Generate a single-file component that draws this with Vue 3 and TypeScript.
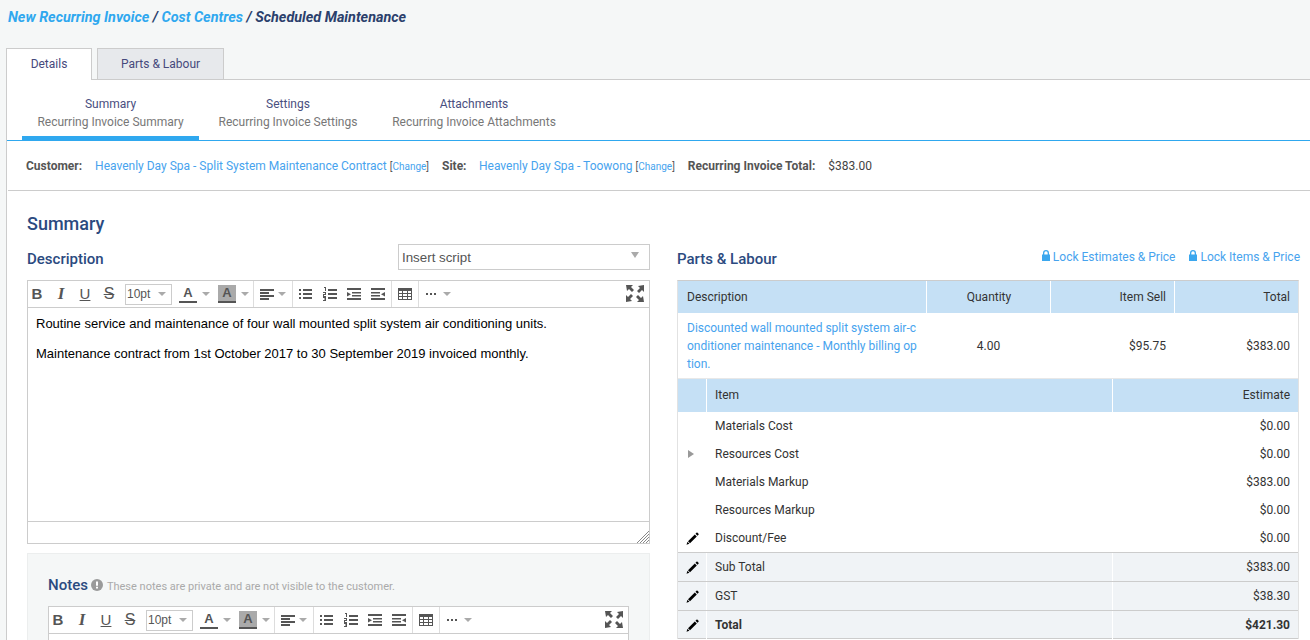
<template>
  <div class="page">
    <div class="crumbs">
      <a>New Recurring Invoice</a> / <a>Cost Centres</a> / <span class="crumb-current">Scheduled Maintenance</span>
    </div>

    <div class="tabs">
      <div class="tab active">Details</div>
      <div class="tab">Parts &amp; Labour</div>
    </div>

    <div class="panel">
      <div class="subtabs">
        <div
          v-for="(tab, i) in subTabs"
          :key="tab.title"
          class="subtab"
          :class="{ current: i === 0 }"
        >
          <div class="subtab-title">{{ tab.title }}</div>
          <div class="subtab-sub">{{ tab.sub }}</div>
        </div>
      </div>

      <div class="info-row">
        <b>Customer:</b>
        <a class="info-link">Heavenly Day Spa - Split System Maintenance Contract</a>
        <span class="change">[<a>Change</a>]</span>
        <b class="info-site">Site:</b>
        <a class="info-link site-link">Heavenly Day Spa - Toowong</a>
        <span class="change">[<a>Change</a>]</span>
        <b class="info-total">Recurring Invoice Total:</b>
        <span class="info-amount">$383.00</span>
      </div>

      <div class="content">
        <h2 class="section-title">Summary</h2>
        <div class="columns">
          <div class="col">
            <div class="col-head">
              <h3>Description</h3>
              <div class="script-select">
                <span>Insert script</span>
                <i class="caret select-caret" />
              </div>
            </div>

            <div class="editor">
              <div class="toolbar">
                <div class="tool-group g-format">
                  <span class="fmt bold">B</span>
                  <span class="fmt ital">I</span>
                  <span class="fmt under">U</span>
                  <span class="fmt strike">S</span>
                  <span class="size-box">10pt<i class="caret" /></span>
                  <span class="color-btn"><span class="color-a">A</span></span><i class="caret c-gap" />
                  <span class="color-btn"><span class="color-a shaded">A</span></span><i class="caret c-gap" />
                </div>
                <div class="tool-group g-align">
                  <svg class="ico" width="16" height="14" viewBox="0 0 16 14"><path v-for="d in icons.align" :key="d" :d="d" /></svg>
                  <i class="caret c-tight" />
                </div>
                <div class="tool-group g-lists">
                  <svg v-for="name in listIcons" :key="name" class="ico" width="16" height="14" viewBox="0 0 16 14"><path v-for="d in icons[name]" :key="d" :d="d" /></svg>
                </div>
                <div class="tool-group g-table">
                  <svg class="ico" width="16" height="14" viewBox="0 0 16 14"><path :d="icons.table" fill-rule="evenodd" /></svg>
                </div>
                <div class="tool-group g-more">
                  <svg class="ico" width="12" height="14" viewBox="0 0 12 14"><path d="M1 6h2v2H1zM5 6h2v2H5zM9 6h2v2H9z" /></svg>
                  <i class="caret c-more" />
                </div>
                <svg class="ico fullscreen" width="18" height="17" viewBox="0 0 18 17"><path :d="icons.full" /></svg>
              </div>
              <div class="editor-body">
                <p>Routine service and maintenance of four wall mounted split system air conditioning units.</p>
                <p>Maintenance contract from 1st October 2017 to 30 September 2019 invoiced monthly.</p>
              </div>
              <div class="editor-status">
                <svg class="grip" width="12" height="12" viewBox="0 0 12 12"><path d="M0 12 12 0M3 12l9-9M6 12l6-6M9 12l3-3" stroke="#888" fill="none" /></svg>
              </div>
            </div>

            <div class="notes">
              <div class="notes-head">
                <h3>Notes</h3>
                <svg class="info-ico" width="12" height="12" viewBox="0 0 12 12"><circle cx="6" cy="6" r="6" fill="#9a9a9a" /><path d="M5 2.500h2v4.200H5zM5 7.800h2v1.800H5z" fill="#fff" /></svg>
                <span class="notes-hint">These notes are private and are not visible to the customer.</span>
              </div>
              <div class="editor notes-editor">
                <div class="toolbar">
                  <div class="tool-group g-format">
                    <span class="fmt bold">B</span>
                    <span class="fmt ital">I</span>
                    <span class="fmt under">U</span>
                    <span class="fmt strike">S</span>
                    <span class="size-box">10pt<i class="caret" /></span>
                    <span class="color-btn"><span class="color-a">A</span></span><i class="caret c-gap" />
                    <span class="color-btn"><span class="color-a shaded">A</span></span><i class="caret c-gap" />
                  </div>
                  <div class="tool-group g-align">
                    <svg class="ico" width="16" height="14" viewBox="0 0 16 14"><path v-for="d in icons.align" :key="d" :d="d" /></svg>
                    <i class="caret c-tight" />
                  </div>
                  <div class="tool-group g-lists">
                    <svg v-for="name in listIcons" :key="name" class="ico" width="16" height="14" viewBox="0 0 16 14"><path v-for="d in icons[name]" :key="d" :d="d" /></svg>
                  </div>
                  <div class="tool-group g-table">
                    <svg class="ico" width="16" height="14" viewBox="0 0 16 14"><path :d="icons.table" fill-rule="evenodd" /></svg>
                  </div>
                  <div class="tool-group g-more">
                    <svg class="ico" width="12" height="14" viewBox="0 0 12 14"><path d="M1 6h2v2H1zM5 6h2v2H5zM9 6h2v2H9z" /></svg>
                    <i class="caret c-more" />
                  </div>
                  <svg class="ico fullscreen" width="18" height="17" viewBox="0 0 18 17"><path :d="icons.full" /></svg>
                </div>
                <div class="editor-body notes-body" />
              </div>
            </div>
          </div>

          <div class="col">
            <div class="col-head">
              <h3>Parts &amp; Labour</h3>
              <div class="locks">
                <a v-for="label in lockLinks" :key="label">
                  <svg width="8" height="11" viewBox="0 0 8 11"><path d="M1 4.500V3a3 3 0 0 1 6 0v1.500h1V11H0V4.500zm1.300 0h3.400V3a1.700 1.700 0 0 0-3.400 0z" fill="#3ba7ee" fill-rule="evenodd" /></svg>
                  {{ label }}
                </a>
              </div>
            </div>

            <div class="grid-table">
              <div class="row cols-main head first-head">
                <div>Description</div>
                <div class="center">Quantity</div>
                <div class="right">Item Sell</div>
                <div class="right">Total</div>
              </div>
              <div class="row cols-main line-row">
                <div class="line-desc">Discounted wall mounted split system air-conditioner maintenance - Monthly billing option.</div>
                <div class="center">4.00</div>
                <div class="right">$95.75</div>
                <div class="right">$383.00</div>
              </div>
              <div class="row cols-sub head">
                <div />
                <div class="item-cell">Item</div>
                <div class="right">Estimate</div>
              </div>
              <div v-for="item in costRows" :key="item.label" class="row cols-sub cost">
                <div class="marker">
                  <i v-if="item.expand" class="expand" />
                  <svg v-if="item.edit" width="13" height="13" viewBox="0 0 13 13"><path :d="icons.pencil" /></svg>
                </div>
                <div>{{ item.label }}</div>
                <div class="right">{{ item.value }}</div>
              </div>
              <div
                v-for="item in totalRows"
                :key="item.label"
                class="row cols-sub total"
                :class="{ grand: item.grand }"
              >
                <div class="marker">
                  <svg width="13" height="13" viewBox="0 0 13 13"><path :d="icons.pencil" /></svg>
                </div>
                <div class="item-cell">{{ item.label }}</div>
                <div class="right">{{ item.value }}</div>
              </div>
            </div>
          </div>
        </div>
      </div>
    </div>
  </div>
</template>

<script setup lang="ts">
const subTabs = [
  { title: 'Summary', sub: 'Recurring Invoice Summary' },
  { title: 'Settings', sub: 'Recurring Invoice Settings' },
  { title: 'Attachments', sub: 'Recurring Invoice Attachments' }
]

const lockLinks = ['Lock Estimates & Price', 'Lock Items & Price']

const costRows = [
  { label: 'Materials Cost', value: '$0.00' },
  { label: 'Resources Cost', value: '$0.00', expand: true },
  { label: 'Materials Markup', value: '$383.00' },
  { label: 'Resources Markup', value: '$0.00' },
  { label: 'Discount/Fee', value: '$0.00', edit: true }
]

const totalRows = [
  { label: 'Sub Total', value: '$383.00' },
  { label: 'GST', value: '$38.30' },
  { label: 'Total', value: '$421.30', grand: true }
]

const listIcons = ['bullets', 'numbers', 'indent', 'outdent'] as const

// toolbar glyphs, all on small pixel grids
const icons = {
  align: ['M1 2h14v2H1z', 'M1 5h9v2H1z', 'M1 8h14v2H1z', 'M1 11h9v2H1z'],
  bullets: ['M1 2h2v2H1zM5 2h9v2H5z', 'M1 6h2v2H1zM5 6h9v2H5z', 'M1 10h2v2H1zM5 10h9v2H5z'],
  numbers: ['M2 0h2v4H3V1H2z', 'M1 5h3v3H2v1h2v1H1V7h2V6H1z', 'M1 10h3v4H1v-1h2v-.5H2v-1h1V11H1z', 'M6 2h9v2H6zM6 6h9v2H6zM6 10h9v2H6z'],
  indent: ['M1 1h14v2H1z', 'M6 5h9v1.500H6zM6 8h9v1.500H6z', 'M1 5l4 2.200L1 9.500z', 'M1 11h14v2H1z'],
  outdent: ['M1 1h14v2H1z', 'M1 5h9v1.500H1zM1 8h9v1.500H1z', 'M15 5l-4 2.200 4 2.300z', 'M1 11h14v2H1z'],
  table: 'M1 1h14v12H1zM2 4v2h3V4zm4 0v2h4V4zm5 0v2h3V4zM2 7v2h3V7zm4 0v2h4V7zm5 0v2h3V7zM2 10v2h3v-2zm4 0v2h4v-2zm5 0v2h3v-2z',
  full: 'M0 0h7L5 2l3 3-2 2-3-3-2 2zM18 0v7l-2-2-3 3-2-2 3-3-2-2zM0 17v-7l2 2 3-3 2 2-3 3 2 2zM18 17h-7l2-2-3-3 2-2 3 3 2-2z',
  pencil: 'M10.500.8c.3-.3.7-.3 1 0l1 1c.3.3.3.7 0 1l-1 1-2-2zM8.800 2.500l2 2-6.800 6.800-2-2zM1.500 9.800l1.900 1.900-2.900 1z'
}
</script>

<style>
html,
body {
  margin: 0;
  height: 640px;
  overflow: hidden;
  background: #f5f7f7;
}
</style>

<style scoped>
.page {
  font-family: Roboto, "Liberation Sans", sans-serif;
  font-size: 12px;
  color: #333;
  height: 640px;
  overflow: hidden;
  background: #f5f7f7;
}

.crumbs {
  height: 48px;
  box-sizing: border-box;
  padding: 10px 8px 0;
  font-size: 14.4px;
  line-height: 16px;
  font-weight: 700;
  font-style: italic;
  color: #2b3f6c;
}

.crumbs a {
  color: #2fa8ef;
}

.crumb-current {
  color: #2b3f6c;
}

.tabs {
  display: flex;
  gap: 5px;
  padding-left: 6px;
  height: 31px;
}

.tab {
  box-sizing: border-box;
  width: 127px;
  height: 31px;
  line-height: 31px;
  text-align: center;
  color: #46497c;
  background: #e7e9ec;
  border: 1px solid #ccc;
  border-bottom: 0;
}

.tab.active {
  width: 86px;
  height: 32px;
  background: #fff;
  position: relative;
  z-index: 1;
}

.panel {
  margin-left: 6px;
  background: #fff;
  border-left: 1px solid #ccc;
  border-top: 1px solid #ccc;
  height: 560px;
}

.subtabs {
  display: flex;
  height: 60px;
  padding-left: 15px;
  border-bottom: 1px solid #2fa8ef;
}

.subtab {
  box-sizing: border-box;
  height: 60px;
  padding: 15px 0 0;
  width: 177px;
  text-align: center;
  line-height: 18px;
}

.subtab:nth-child(2) {
  width: 178px;
}

.subtab:last-child {
  width: 194px;
}

.subtab.current {
  border-bottom: 4px solid #2fa8ef;
}

.subtab-title {
  color: #4a4f80;
}

.subtab-sub {
  color: #777;
}

.info-row {
  display: flex;
  align-items: center;
  height: 49px;
  margin-left: 1px;
  padding-left: 18px;
  border-bottom: 1px solid #ccc;
}

.info-row b {
  font-weight: 700;
  color: #555;
}

.info-link {
  margin-left: 13px;
  color: #47a3ee;
}

.site-link {
  margin-left: 12.500px;
}

.change {
  margin-left: 3px;
  padding-top: 1px;
  font-size: 10px;
  color: #555;
}

.change a {
  color: #47a3ee;
}

.info-site,
.info-total {
  margin-left: 13px;
}

.info-amount {
  margin-left: 13px;
  color: #444;
}

.content {
  padding: 0 10px 0 20px;
}

.section-title {
  margin: 0;
  padding-top: 22px;
  height: 53px;
  box-sizing: border-box;
  font-size: 18px;
  line-height: 21px;
  font-weight: 500;
  color: #2b4a80;
}

.columns {
  display: flex;
  gap: 27px;
}

.col {
  width: 623px;
  flex: none;
}

.col-head {
  display: flex;
  justify-content: space-between;
  align-items: center;
  height: 26px;
  margin-bottom: 10px;
}

h3 {
  margin: 0;
  font-size: 15px;
  line-height: 16px;
  font-weight: 500;
  color: #2b4a80;
  padding-top: 4px;
}

.script-select {
  box-sizing: border-box;
  width: 252px;
  height: 26px;
  padding: 0 10px 0 3px;
  display: flex;
  justify-content: space-between;
  align-items: center;
  border: 1px solid #ccc;
  font-family: "Liberation Sans", Arial, sans-serif;
  font-size: 13.33px;
  color: #555;
}

.caret {
  display: inline-block;
  width: 0;
  height: 0;
  border-left: 4px solid transparent;
  border-right: 4px solid transparent;
  border-top: 4px solid #aaa;
}

.select-caret {
  border-left-width: 4.500px;
  border-right-width: 4.500px;
  border-top-width: 6px;
  margin-top: -4px;
}

.editor {
  box-sizing: border-box;
  border: 1px solid #ccc;
  background: #fff;
}

.toolbar {
  display: flex;
  align-items: center;
  height: 26px;
  border-bottom: 1px solid #ccc;
  position: relative;
  color: #555;
}

.tool-group {
  display: flex;
  align-items: center;
  height: 26px;
  border-right: 1px solid #ddd;
}

.g-format {
  padding-right: 3px;
}

.g-align {
  padding: 0 6px 0 5px;
}

.g-lists {
  gap: 8px;
  padding: 0 5px;
}

.g-table {
  padding: 0 5px;
}

.g-more {
  padding-left: 6px;
  border-right: 0;
}

.fmt {
  width: 24px;
  text-align: center;
  font-family: "Liberation Sans", Arial, sans-serif;
  font-size: 15px;
  line-height: 26px;
  color: #555;
}

.fmt.bold {
  font-weight: 700;
  margin-left: -3px;
}

.fmt.ital {
  font-style: italic;
  font-weight: 700;
  font-family: "Liberation Serif", serif;
  font-size: 17px;
}

.fmt.under {
  text-decoration: underline;
}

.fmt.strike {
  text-decoration: line-through;
  font-size: 16px;
}

.size-box {
  box-sizing: border-box;
  width: 47px;
  height: 21px;
  margin-left: 4px;
  padding: 0 5px 0 1px;
  display: flex;
  align-items: center;
  justify-content: space-between;
  border: 1px solid #ccc;
  font-family: "Liberation Sans", Arial, sans-serif;
  color: #555;
}

.color-btn {
  display: block;
  margin-left: 7px;
}

.color-btn + .caret {
  margin-left: 5px;
}

.color-a {
  display: block;
  width: 18px;
  height: 16px;
  line-height: 16px;
  text-align: center;
  font-family: "Liberation Sans", Arial, sans-serif;
  font-weight: 700;
  font-size: 13px;
  color: #555;
  border-bottom: 2px solid #555;
}

.color-a.shaded {
  background: #aaa;
}

.c-gap {
  margin-right: 1px;
}

.c-tight {
  margin-left: 3px;
}

.c-more {
  margin-left: 6px;
}

.ico {
  fill: #555;
  flex: none;
}

.fullscreen {
  position: absolute;
  right: 5px;
  top: 4px;
}

.editor-body {
  height: 213px;
  padding: 8px;
  box-sizing: border-box;
  font-family: "Liberation Sans", Arial, sans-serif;
  font-size: 13px;
  line-height: 16px;
  color: #000;
}

.editor-body p {
  margin: 0 0 14px;
}

.editor-status {
  height: 21px;
  border-top: 1px solid #ccc;
  position: relative;
}

.grip {
  position: absolute;
  right: 0;
  bottom: 0;
}

.notes {
  margin-top: 9px;
  padding: 21px 20px 0;
  background: #f5f7f7;
  border: 1px solid #eceeee;
  height: 200px;
  box-sizing: border-box;
}

.notes-head {
  display: flex;
  align-items: center;
  height: 20px;
  margin-bottom: 11px;
}

.notes-head h3 {
  padding-top: 0;
}

.info-ico {
  margin-left: 3px;
}

.notes-hint {
  margin-left: 4px;
  font-size: 11px;
  color: #aaa;
  padding-top: 2px;
}

.notes-body {
  height: 80px;
}

.locks {
  display: flex;
  gap: 14px;
  margin-top: -1px;
}

.locks a {
  color: #47a3ee;
}

.grid-table {
  border-top: 1px solid #ccc;
  border-left: 1px solid #e2e2e2;
  border-right: 1px solid #e2e2e2;
  width: 622px;
  box-sizing: border-box;
}

.row {
  display: grid;
  align-items: center;
  color: #333;
}

.row > div {
  box-sizing: border-box;
  padding: 0 8px 0 9px;
}

.row > .item-cell {
  padding-left: 8px;
}

.cols-main {
  grid-template-columns: 248px 124px 124px 1fr;
}

.cols-sub {
  grid-template-columns: 28px 406px 1fr;
}

.head {
  height: 33px;
  background: #c5e0f5;
  align-items: stretch;
}

.first-head {
  height: 32px;
}

.head > div {
  line-height: 32px;
  border-left: 1px solid #fff;
}

.head > div:first-child {
  border-left: 0;
}

.line-row {
  height: 66px;
  border-bottom: 1px solid #e8e8e8;
  box-sizing: border-box;
}

.line-desc {
  color: #47a3ee;
  line-height: 18px;
  word-break: break-all;
}

.center {
  text-align: center;
}

.right {
  text-align: right;
}

.cost {
  height: 28px;
}

.marker {
  display: flex;
  align-items: center;
  justify-content: center;
  padding: 0 !important;
}

.expand {
  display: block;
  width: 0;
  height: 0;
  border-top: 4px solid transparent;
  border-bottom: 4px solid transparent;
  border-left: 6px solid #999;
  margin-right: 3px;
}

.total {
  box-sizing: border-box;
  height: 29px;
  background: #f0f3f6;
  border-top: 1px solid #ccc;
  align-items: stretch;
}

.total > div {
  line-height: 28px;
  border-left: 1px solid #fff;
}

.total > div:first-child {
  border-left: 0;
}

.grand {
  font-weight: 700;
  border-bottom: 1px solid #ccc;
}
</style>
